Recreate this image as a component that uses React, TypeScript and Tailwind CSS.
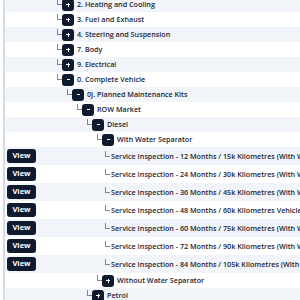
import React from "react";

type Row =
  | { kind: "tree"; level: number; open: boolean; label: string }
  | { kind: "leaf"; label: string };

const rows: Row[] = [
  { kind: "tree", level: 0, open: false, label: "2. Heating and Cooling" },
  { kind: "tree", level: 0, open: false, label: "3. Fuel and Exhaust" },
  { kind: "tree", level: 0, open: false, label: "4. Steering and Suspension" },
  { kind: "tree", level: 0, open: false, label: "7. Body" },
  { kind: "tree", level: 0, open: false, label: "9. Electrical" },
  { kind: "tree", level: 0, open: true, label: "0. Complete Vehicle" },
  { kind: "tree", level: 1, open: true, label: "0J. Planned Maintenance Kits" },
  { kind: "tree", level: 2, open: true, label: "ROW Market" },
  { kind: "tree", level: 3, open: true, label: "Diesel" },
  { kind: "tree", level: 4, open: true, label: "With Water Separator" },
  { kind: "leaf", label: "Service Inspection - 12 Months / 15k Kilometres (With Water Separator)" },
  { kind: "leaf", label: "Service Inspection - 24 Months / 30k Kilometres (With Water Separator)" },
  { kind: "leaf", label: "Service Inspection - 36 Months / 45k Kilometres (With Water Separator)" },
  { kind: "leaf", label: "Service Inspection - 48 Months / 60k Kilometres Vehicles (With Water Separator)" },
  { kind: "leaf", label: "Service Inspection - 60 Months / 75k Kilometres (With Water Separator)" },
  { kind: "leaf", label: "Service Inspection - 72 Months / 90k Kilometres (With Water Separator)" },
  { kind: "leaf", label: "Service Inspection - 84 Months / 105k Kilometres (With Water Separator)" },
  { kind: "tree", level: 4, open: false, label: "Without Water Separator" },
  { kind: "tree", level: 3, open: false, label: "Petrol" },
];

const indents = ["w-[52px]", "w-[62px]", "w-[72px]", "w-[82px]", "w-[92px]"];

function Connector() {
  return (
    <span className="inline-block w-[5px] h-[6px] border-l border-b border-[#7b8794] mb-[5px] shrink-0" />
  );
}

function Toggle({ open }: { open: boolean }) {
  return (
    <span className="w-[12px] h-[12px] rounded-[3px] bg-[#0f1a2e] flex items-center justify-center shrink-0">
      {open ? (
        <span className="block w-[3px] h-[1px] bg-white" />
      ) : (
        <span className="relative block w-[4px] h-[4px]">
          <span className="absolute left-0 top-[1.5px] w-[4px] h-[1px] bg-white" />
          <span className="absolute top-0 left-[1.5px] w-[1px] h-[4px] bg-white" />
        </span>
      )}
    </span>
  );
}

export default function App() {
  return (
    <div
      className="w-[300px] h-[300px] overflow-hidden bg-white pl-[3px]"
      style={{ fontFamily: '"Open Sans", sans-serif' }}
    >
      <div className="border-l-2 border-[#d3dbe4] -mt-[3px] text-[7.2px] font-semibold text-[#1c2533] whitespace-nowrap">
        {rows.map((r, i) => {
          const bg = i % 2 === 0 ? "bg-[#f1f4f8]" : "bg-white";
          if (r.kind === "tree") {
            return (
              <div key={i} className={`flex items-center h-[15px] ${bg}`}>
                <span className={`${indents[r.level]} shrink-0`} />
                <Connector />
                <Toggle open={r.open} />
                <span className="ml-[3px]">{r.label}</span>
              </div>
            );
          }
          return (
            <div key={i} className={`flex items-center h-[18px] ${bg}`}>
              <span className="ml-[2px] w-[29px] h-[14px] rounded-[3px] bg-[#0f1a2e] text-white flex items-center justify-center text-[7.5px] font-bold shrink-0">
                View
              </span>
              <span className="w-[69px] shrink-0" />
              <Connector />
              <span className="ml-[1px]">{r.label}</span>
            </div>
          );
        })}
      </div>
    </div>
  );
}
